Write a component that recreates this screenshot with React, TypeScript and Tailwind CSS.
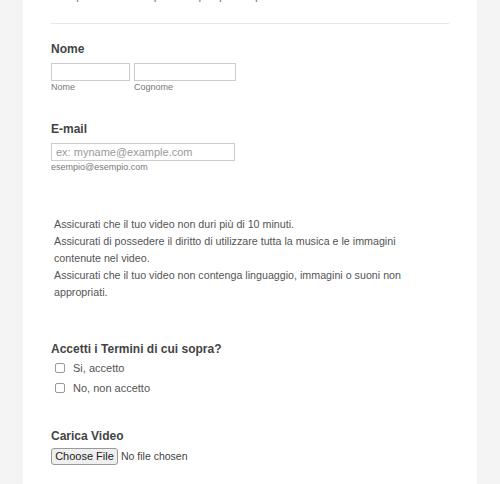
import React from "react";

export default function App() {
  return (
    <div className="min-h-screen bg-[#f4f4f4] font-['Liberation_Sans',Arial,sans-serif]">
      <div className="mx-[23px] h-[484px] overflow-hidden bg-white px-[28px]">
        <p className="-mt-[12px] text-[12px] leading-[14px] text-[#777]">
          Compila il modulo qui sotto per partecipare al concorso
        </p>
        <div className="mt-[21px] border-t border-[#e8e8e8]" />

        <h3 className="mt-[18px] text-[12px] font-bold leading-[14px] text-[#444]">Nome</h3>
        <div className="mt-[7px] flex gap-[4px]">
          <div className="flex flex-col">
            <input className="h-[18px] w-[79px] border border-[#ccc] bg-white outline-none" />
            <span className="mt-[1px] text-[9px] leading-[10px] text-[#777]">Nome</span>
          </div>
          <div className="flex flex-col">
            <input className="h-[18px] w-[102px] border border-[#ccc] bg-white outline-none" />
            <span className="mt-[1px] text-[9px] leading-[10px] text-[#777]">Cognome</span>
          </div>
        </div>

        <h3 className="mt-[30px] text-[12px] font-bold leading-[14px] text-[#444]">E-mail</h3>
        <input
          placeholder="ex: myname@example.com"
          className="mt-[7px] block h-[18px] w-[184px] border border-[#ccc] bg-white px-[4px] text-[11px] text-[#555] outline-none placeholder:text-[#999]"
        />
        <span className="mt-[1px] block text-[9px] leading-[10px] text-[#777]">esempio@esempio.com</span>

        <div className="mt-[44px] w-[373px] pl-[3px] text-[10.7px] leading-[17px] text-[#555]">
          <p>Assicurati che il tuo video non duri più di 10 minuti.</p>
          <p>Assicurati di possedere il diritto di utilizzare tutta la musica e le immagini contenute nel video.</p>
          <p>Assicurati che il tuo video non contenga linguaggio, immagini o suoni non appropriati.</p>
        </div>

        <h3 className="mt-[41px] text-[12px] font-bold leading-[14px] text-[#444]">
          Accetti i Termini di cui sopra?
        </h3>
        <div className="mt-[2px] flex flex-col">
          {["Si, accetto", "No, non accetto"].map((t) => (
            <label key={t} className="flex h-[20px] items-center gap-[8px] pl-[4px]">
              <span className="h-[10px] w-[10px] rounded-[2px] border border-[#999] bg-white" />
              <span className="text-[11px] text-[#555]">{t}</span>
            </label>
          ))}
        </div>

        <h3 className="mt-[31px] text-[12px] font-bold leading-[14px] text-[#444]">Carica Video</h3>
        <div className="mt-[5px] flex items-center gap-[3px]">
          <button className="h-[17px] w-[67px] rounded-[3px] border border-[#999] bg-[#efefef] text-[11px] leading-[15px] text-[#222]">
            Choose File
          </button>
          <span className="text-[10.5px] text-[#444]">No file chosen</span>
        </div>
      </div>
    </div>
  );
}
